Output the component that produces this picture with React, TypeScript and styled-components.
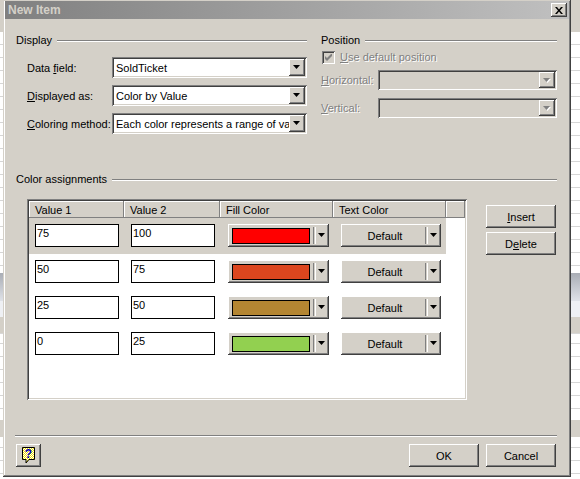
import React from "react";
import styled, { createGlobalStyle, css } from "styled-components";

const GlobalStyle = createGlobalStyle`
  html, body { margin: 0; padding: 0; }
  body {
    font-family: "Liberation Sans", Arial, sans-serif;
    font-size: 11px;
    color: #000;
  }
`;

const face = "#d4d0c8";

const raised = css`
  box-shadow: inset -1px -1px #404040, inset 1px 1px #ffffff,
    inset -2px -2px #808080, inset 2px 2px ${face};
`;

const sunken = css`
  box-shadow: inset 1px 1px #808080, inset -1px -1px #ffffff,
    inset 2px 2px #404040, inset -2px -2px ${face};
`;

/* Spreadsheet behind the dialog */
const Desktop = styled.div`
  width: 580px;
  height: 479px;
  overflow: hidden;
  background-color: #ffffff;
  background-image: linear-gradient(${face}, ${face}),
    linear-gradient(#d8d8d8, #d8d8d8),
    linear-gradient(${face}, ${face}),
    linear-gradient(#eef0f4, #eef0f4),
    linear-gradient(#a9adb5, #dfe2e8),
    linear-gradient(${face}, ${face}),
    repeating-linear-gradient(
      to bottom,
      transparent 0 12px,
      #d6d6d6 12px 13px
    );
  background-repeat: no-repeat;
  background-size: 100% 17px, 100% 1px, 100% 16px, 100% 16px, 100% 28px,
    100% 32px, 100% 100%;
  background-position: 0 420px, 0 333px, 0 317px, 0 301px, 0 273px, 0 0, 0 32px;
`;

const Window = styled.div`
  margin-left: 3px;
  width: 568px;
  height: 477px;
  box-sizing: border-box;
  padding: 1px 2px 0 2px;
  background: ${face};
  box-shadow: inset -1px -1px #404040, inset 1px 1px ${face},
    inset -2px -2px #808080, inset 2px 2px #ffffff;
  display: flex;
  flex-direction: column;
`;

const TitleBar = styled.div`
  height: 18px;
  display: flex;
  align-items: center;
  justify-content: space-between;
  padding: 0 2px 0 3px;
  background: linear-gradient(to right, #808080, #c0c0c0);
`;

const Title = styled.span`
  color: ${face};
  font-weight: bold;
  font-size: 12px;
`;

const CloseButton = styled.div`
  width: 16px;
  height: 14px;
  ${raised};
  background: ${face};
  display: flex;
  align-items: center;
  justify-content: center;
`;

const Body = styled.div`
  flex: 1;
  display: flex;
  flex-direction: column;
  padding: 0 12px 0 11px;
`;

const Top = styled.div`
  display: flex;
  gap: 14px;
  margin-top: 15px;
`;

const Group = styled.div<{ $w: number }>`
  width: ${(p) => p.$w}px;
  display: flex;
  flex-direction: column;
`;

const GroupHeader = styled.div`
  height: 13px;
  display: flex;
  align-items: center;
  gap: 5px;
  line-height: 13px;
`;

const Rule = styled.div`
  flex: 1;
  height: 0;
  border-top: 1px solid #808080;
  border-bottom: 1px solid #ffffff;
`;

const FieldList = styled.div<{ $top: number; $gap: number; $indent: number }>`
  display: flex;
  flex-direction: column;
  gap: ${(p) => p.$gap}px;
  margin-top: ${(p) => p.$top}px;
  padding-left: ${(p) => p.$indent}px;
`;

const FieldRow = styled.div`
  display: flex;
  align-items: center;
`;

const FieldLabel = styled.span<{ $w: number; $disabled?: boolean }>`
  width: ${(p) => p.$w}px;
  white-space: nowrap;
  ${(p) =>
    p.$disabled &&
    css`
      color: #808080;
      text-shadow: 1px 1px #ffffff;
    `}
`;

const Combo = styled.div<{ $w: number; $h: number; $disabled?: boolean }>`
  width: ${(p) => p.$w}px;
  height: ${(p) => p.$h}px;
  box-sizing: border-box;
  padding: 2px;
  ${sunken};
  background: ${(p) => (p.$disabled ? face : "#ffffff")};
  display: flex;
  align-items: stretch;
`;

const ComboText = styled.span`
  flex: 1;
  min-width: 0;
  padding-left: 2px;
  display: flex;
  align-items: center;
  white-space: nowrap;
  overflow: hidden;
`;

const DropButton = styled.div`
  width: 16px;
  flex: none;
  ${raised};
  background: ${face};
  display: flex;
  align-items: center;
  justify-content: center;
`;

const CheckRow = styled.div`
  display: flex;
  align-items: center;
  gap: 5px;
  margin-top: 3px;
  padding-left: 1px;
  height: 14px;
`;

const CheckBox = styled.div`
  width: 13px;
  height: 13px;
  box-sizing: border-box;
  ${sunken};
  background: ${face};
  display: flex;
  align-items: center;
  justify-content: center;
`;

const ColorHeader = styled(GroupHeader)`
  margin-top: 39px;
`;

const ColorBody = styled.div`
  display: flex;
  align-items: flex-start;
  margin-top: 13px;
  padding-left: 11px;
`;

const ListBox = styled.div`
  width: 440px;
  height: 201px;
  box-sizing: border-box;
  padding: 2px;
  ${sunken};
  background: #ffffff;
  display: flex;
  flex-direction: column;
`;

const HeaderRow = styled.div`
  display: flex;
  height: 17px;
  background: ${face};
`;

const HeaderCell = styled.div<{ $w?: number }>`
  ${(p) => (p.$w ? `width: ${p.$w}px;` : "flex: 1;")}
  box-sizing: border-box;
  padding-left: 6px;
  display: flex;
  align-items: center;
  box-shadow: inset -1px -1px #808080, inset 1px 1px #ffffff;
`;

const Columns = "95px 96px 113px 113px";

const DataRow = styled.div<{ $selected?: boolean }>`
  width: 417px;
  height: 36px;
  box-sizing: border-box;
  padding-top: 6px;
  display: grid;
  grid-template-columns: ${Columns};
  align-items: start;
  background: ${(p) => (p.$selected ? face : "transparent")};
`;

const Cell = styled.div<{ $pad: number }>`
  padding-left: ${(p) => p.$pad}px;
`;

const ValueBox = styled.div`
  width: 84px;
  height: 23px;
  box-sizing: border-box;
  border: 1px solid #000;
  background: #ffffff;
  padding: 2px 0 0 1px;
  line-height: 13px;
`;

const PickButton = styled.div<{ $w: number }>`
  width: ${(p) => p.$w}px;
  height: 23px;
  box-sizing: border-box;
  ${raised};
  background: ${face};
  display: flex;
  align-items: center;
  padding: 0 2px 0 4px;
`;

const Swatch = styled.div<{ $color: string }>`
  width: 80px;
  height: 16px;
  box-sizing: border-box;
  border: 1px solid #000;
  background: ${(p) => p.$color};
`;

const PickLabel = styled.span`
  flex: 1;
  text-align: center;
`;

const Divider = styled.div<{ $gap: number }>`
  width: 1px;
  height: 17px;
  margin-left: ${(p) => p.$gap}px;
  border-left: 1px solid #808080;
  border-right: 1px solid #ffffff;
`;

const ArrowSlot = styled.div`
  width: 11px;
  flex: none;
  display: flex;
  justify-content: center;
`;

const SideButtons = styled.div`
  display: flex;
  flex-direction: column;
  gap: 4px;
  margin: 6px 0 0 19px;
`;

const PushButton = styled.div<{ $w: number }>`
  width: ${(p) => p.$w}px;
  height: 23px;
  box-sizing: border-box;
  ${raised};
  background: ${face};
  display: flex;
  align-items: center;
  justify-content: center;
`;

const Separator = styled.div`
  margin: 35px 0 0 -1px;
  border-top: 1px solid #808080;
  border-bottom: 1px solid #ffffff;
`;

const Footer = styled.div`
  display: flex;
  align-items: center;
  gap: 7px;
  margin-top: 7px;
  padding-right: 1px;
`;

const Spacer = styled.div`
  flex: 1;
`;

const U = styled.span`
  text-decoration: underline;
  text-underline-offset: 1px;
`;

const Arrow = ({ disabled }: { disabled?: boolean }) => (
  <svg width="8" height="5" viewBox="0 0 8 5">
    {disabled && <path d="M1 1h7L4.5 5z" fill="#ffffff" />}
    <path d="M0 0h7L3.5 4z" fill={disabled ? "#808080" : "#000"} />
  </svg>
);

const CloseGlyph = () => (
  <svg width="8" height="7" viewBox="0 0 8 7">
    <path
      d="M0 0h2l2 2.5L6 0h2L5 3.5 8 7H6L4 4.5 2 7H0l3-3.5z"
      fill="#000"
    />
  </svg>
);

const CheckGlyph = () => (
  <svg width="7" height="7" viewBox="0 0 7 7">
    <path d="M0 2v3l2 2 5-5V-1L2 4z" fill="#808080" />
  </svg>
);

const HelpIcon = () => (
  <svg width="14" height="17" viewBox="0 0 14 17">
    <defs>
      <pattern id="dots" width="2" height="2" patternUnits="userSpaceOnUse">
        <rect width="2" height="2" fill="#ffffff" />
        <rect width="1" height="1" fill="#f0e000" />
        <rect x="1" y="1" width="1" height="1" fill="#f0e000" />
      </pattern>
    </defs>
    <path d="M0.5 0.5h12v12H7l-3 3.5v-3.5H0.5z" fill="url(#dots)" stroke="#000" />
    <text
      x="6.5"
      y="11"
      textAnchor="middle"
      fontFamily="Liberation Sans, Arial, sans-serif"
      fontWeight="bold"
      fontSize="12"
      fill="#0000c0"
    >
      ?
    </text>
  </svg>
);

type Range = { from: string; to: string; fill: string };

const ranges: Range[] = [
  { from: "75", to: "100", fill: "#ff0000" },
  { from: "50", to: "75", fill: "#dc461e" },
  { from: "25", to: "50", fill: "#b48632" },
  { from: "0", to: "25", fill: "#92d050" },
];

export default function App() {
  return (
    <Desktop>
      <GlobalStyle />
      <Window>
        <TitleBar>
          <Title>New Item</Title>
          <CloseButton>
            <CloseGlyph />
          </CloseButton>
        </TitleBar>
        <Body>
          <Top>
            <Group $w={291}>
              <GroupHeader>
                Display
                <Rule />
              </GroupHeader>
              <FieldList $top={10} $gap={7} $indent={11}>
                <FieldRow>
                  <FieldLabel $w={85}>
                    Data <U>f</U>ield:
                  </FieldLabel>
                  <Combo $w={195} $h={21}>
                    <ComboText>SoldTicket</ComboText>
                    <DropButton>
                      <Arrow />
                    </DropButton>
                  </Combo>
                </FieldRow>
                <FieldRow>
                  <FieldLabel $w={85}>
                    <U>D</U>isplayed as:
                  </FieldLabel>
                  <Combo $w={195} $h={21}>
                    <ComboText>Color by Value</ComboText>
                    <DropButton>
                      <Arrow />
                    </DropButton>
                  </Combo>
                </FieldRow>
                <FieldRow>
                  <FieldLabel $w={85}>
                    <U>C</U>oloring method:
                  </FieldLabel>
                  <Combo $w={195} $h={21}>
                    <ComboText>Each color represents a range of values</ComboText>
                    <DropButton>
                      <Arrow />
                    </DropButton>
                  </Combo>
                </FieldRow>
              </FieldList>
            </Group>
            <Group $w={236}>
              <GroupHeader>
                Position
                <Rule />
              </GroupHeader>
              <CheckRow>
                <CheckBox>
                  <CheckGlyph />
                </CheckBox>
                <FieldLabel $w={150} $disabled>
                  <U>U</U>se default position
                </FieldLabel>
              </CheckRow>
              <FieldList $top={6} $gap={8} $indent={0}>
                <FieldRow>
                  <FieldLabel $w={57} $disabled>
                    <U>H</U>orizontal:
                  </FieldLabel>
                  <Combo $w={179} $h={20} $disabled>
                    <ComboText />
                    <DropButton>
                      <Arrow disabled />
                    </DropButton>
                  </Combo>
                </FieldRow>
                <FieldRow>
                  <FieldLabel $w={57} $disabled>
                    <U>V</U>ertical:
                  </FieldLabel>
                  <Combo $w={179} $h={20} $disabled>
                    <ComboText />
                    <DropButton>
                      <Arrow disabled />
                    </DropButton>
                  </Combo>
                </FieldRow>
              </FieldList>
            </Group>
          </Top>

          <ColorHeader>
            Color assignments
            <Rule />
          </ColorHeader>
          <ColorBody>
            <ListBox>
              <HeaderRow>
                <HeaderCell $w={95}>Value 1</HeaderCell>
                <HeaderCell $w={96}>Value 2</HeaderCell>
                <HeaderCell $w={113}>Fill Color</HeaderCell>
                <HeaderCell $w={113}>Text Color</HeaderCell>
                <HeaderCell />
              </HeaderRow>
              {ranges.map((r, i) => (
                <DataRow key={r.from} $selected={i === 0}>
                  <Cell $pad={6}>
                    <ValueBox>{r.from}</ValueBox>
                  </Cell>
                  <Cell $pad={7}>
                    <ValueBox>{r.to}</ValueBox>
                  </Cell>
                  <Cell $pad={8}>
                    <PickButton $w={101}>
                      <Swatch $color={r.fill} />
                      <Divider $gap={3} />
                      <ArrowSlot>
                        <Arrow />
                      </ArrowSlot>
                    </PickButton>
                  </Cell>
                  <Cell $pad={8}>
                    <PickButton $w={100}>
                      <PickLabel>Default</PickLabel>
                      <Divider $gap={0} />
                      <ArrowSlot>
                        <Arrow />
                      </ArrowSlot>
                    </PickButton>
                  </Cell>
                </DataRow>
              ))}
            </ListBox>
            <SideButtons>
              <PushButton $w={70}>
                <span>
                  <U>I</U>nsert
                </span>
              </PushButton>
              <PushButton $w={70}>
                <span>
                  D<U>e</U>lete
                </span>
              </PushButton>
            </SideButtons>
          </ColorBody>

          <Separator />
          <Footer>
            <PushButton $w={25}>
              <HelpIcon />
            </PushButton>
            <Spacer />
            <PushButton $w={70}>OK</PushButton>
            <PushButton $w={70}>Cancel</PushButton>
          </Footer>
        </Body>
      </Window>
    </Desktop>
  );
}
